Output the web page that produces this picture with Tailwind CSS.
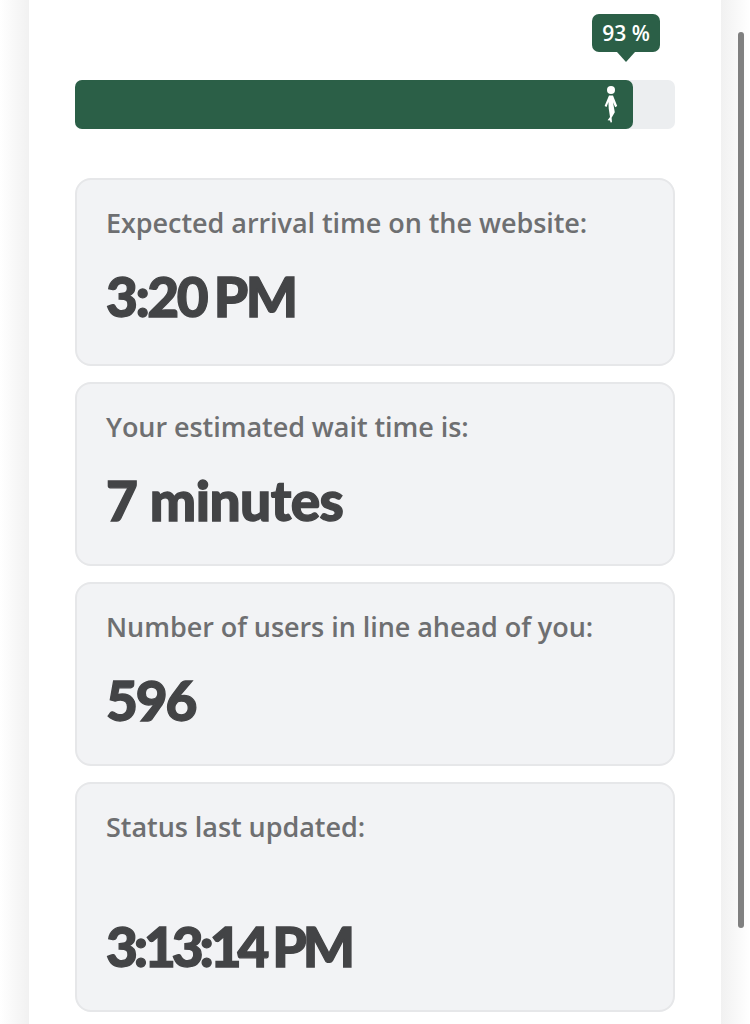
<!DOCTYPE html>
<html lang="en">
<head>
    <meta charset="UTF-8">
    <meta name="viewport" content="width=device-width, initial-scale=1.0">
    <title>Queue status</title>
    <script src="https://cdn.jsdelivr.net/npm/@tailwindcss/browser@4"></script>
</head>
<body class="h-[1024px] overflow-hidden bg-white font-['Open_Sans',sans-serif]">
    <div class="relative flex h-[1024px] w-[750px] overflow-hidden">
        <div class="w-[29px] shrink-0 bg-gradient-to-r from-white to-[#f1f1f1]"></div>

        <main class="w-[692px] shrink-0 bg-white px-[46px] pt-[80px]">
            <!-- progress bar -->
            <div class="relative h-[49px] w-[600px] rounded-[7px] bg-[#eceef0]">
                <div class="relative flex h-full w-[93%] items-center justify-end rounded-[7px] bg-[#2b5f47] pr-[14px]">
                    <svg class="h-[40px] w-[16px]" viewBox="0 0 16 40" fill="#fff">
                        <circle cx="8" cy="5" r="4"/>
                        <path d="M6 10.5h4l4.2 10.5-2 1.2-2.2-5 1.8 10-3.2 5.5.4 4.5-1.4.4-.6-2.1-2.4-.3 2.4-3.2-1.3-8.5-.3-6.5-1.8 5-2-1z"/>
                    </svg>
                </div>
                <div class="absolute left-[517px] top-[-66px] flex h-[38px] w-[68px] items-center justify-center rounded-[7px] bg-[#2b5f47] text-[21px] leading-none font-semibold text-white">
                    93 %
                    <div class="absolute bottom-[-10px] left-[25px] h-0 w-0 border-x-[9px] border-t-[10px] border-x-transparent border-t-[#2b5f47]"></div>
                </div>
            </div>

            <!-- status cards -->
            <div class="mt-[49px] flex flex-col gap-[16px]">
                <div class="h-[188px] rounded-[16px] border-2 border-[#e6e7e9] bg-[#f2f3f5] pl-[29px] pt-[24px]">
                    <p class="text-[27px] leading-[38px] font-semibold tracking-[-0.002em] text-[#6e6f71]">Expected arrival time on the website:</p>
                    <p class="mt-[24px] font-['Lato',sans-serif] text-[55px] leading-[60px] font-black tracking-[-0.045em] [word-spacing:-3px] [-webkit-text-stroke:1.3px_#434446] text-[#434446]">3:20 PM</p>
                </div>
                <div class="h-[184px] rounded-[16px] border-2 border-[#e6e7e9] bg-[#f2f3f5] pl-[29px] pt-[24px]">
                    <p class="text-[27px] leading-[38px] font-semibold tracking-[-0.002em] text-[#6e6f71]">Your estimated wait time is:</p>
                    <p class="mt-[24px] font-['Lato',sans-serif] text-[55px] leading-[60px] font-black tracking-[-0.01em] [-webkit-text-stroke:1.3px_#434446] text-[#434446]">7 minutes</p>
                </div>
                <div class="h-[184px] rounded-[16px] border-2 border-[#e6e7e9] bg-[#f2f3f5] pl-[29px] pt-[24px]">
                    <p class="text-[27px] leading-[38px] font-semibold tracking-[-0.002em] text-[#6e6f71]">Number of users in line ahead of you:</p>
                    <p class="mt-[24px] font-['Lato',sans-serif] text-[55px] leading-[60px] font-black tracking-[-0.04em] [-webkit-text-stroke:1.3px_#434446] text-[#434446]">596</p>
                </div>
                <div class="h-[230px] rounded-[16px] border-2 border-[#e6e7e9] bg-[#f2f3f5] pl-[29px] pt-[24px]">
                    <p class="text-[27px] leading-[38px] font-semibold tracking-[-0.002em] text-[#6e6f71]">Status last updated:</p>
                    <p class="mt-[70px] font-['Lato',sans-serif] text-[55px] leading-[60px] font-black tracking-[-0.075em] [word-spacing:-2px] [-webkit-text-stroke:1.3px_#434446] text-[#434446]">3:13:14 PM</p>
                </div>
            </div>
        </main>

        <div class="flex-1 bg-gradient-to-r from-[#f1f1f1] to-white"></div>
        <!-- scrollbar thumb -->
        <div class="absolute left-[738px] top-[32px] h-[896px] w-[6px] rounded-full bg-[#808080]"></div>
    </div>
</body>
</html>
